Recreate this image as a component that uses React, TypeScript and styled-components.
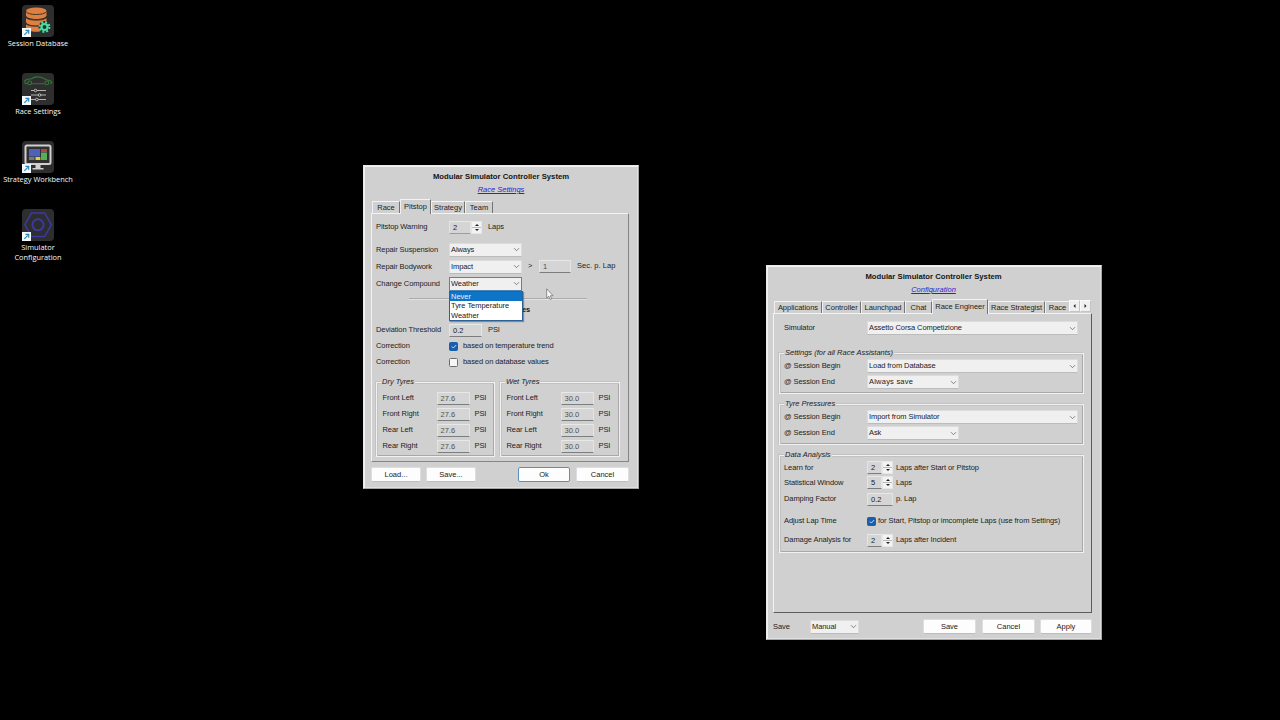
import React from "react";
import styled, { createGlobalStyle } from "styled-components";

const Global = createGlobalStyle`
  * { box-sizing: border-box; }
  html, body { margin: 0; height: 100%; background: #000; overflow: hidden; }
`;

const Desktop = styled.main`
  position: relative;
  width: 1280px;
  height: 720px;
  background: #000;
  font-family: "Liberation Sans", Arial, sans-serif;
  font-size: 7.5px;
  color: #222;
`;

const Shortcuts = styled.nav`
  display: flex;
  flex-direction: column;
  width: 76px;
  padding-top: 5px;
`;

const Shortcut = styled.div`
  display: flex;
  flex-direction: column;
  align-items: center;
  height: 68px;
`;

const ShortcutLabel = styled.span`
  margin: 1px -4px 0;
  font-family: "Open Sans", "Noto Sans", sans-serif;
  font-size: 7.4px;
  line-height: 10px;
  text-align: center;
  white-space: pre;
  color: #f8f8f8;
`;

const Window = styled.section<{ $x: number; $y: number; $w: number; $h: number; $pl: number }>`
  position: absolute;
  left: ${(p) => p.$x}px;
  top: ${(p) => p.$y}px;
  width: ${(p) => p.$w}px;
  height: ${(p) => p.$h}px;
  display: flex;
  flex-direction: column;
  padding: 5px 9px 0 ${(p) => p.$pl}px;
  background: #d0d0d0;
  border: 1px solid;
  border-color: #e9e9e9 #a5a5a5 #a5a5a5 #e9e9e9;
  box-shadow: inset 1px 1px 0 #f2f2f2, inset -1px -1px 0 #e0e0e0;
`;

const Title = styled.h1`
  margin: 0;
  padding-left: 2px;
  font-size: 7.7px;
  line-height: 11px;
  font-weight: 700;
  text-align: center;
  letter-spacing: 0.01px;
  color: #151515;
`;

const Subtitle = styled.a`
  align-self: center;
  margin: 3px 0 0 2px;
  line-height: 10px;
  font-style: italic;
  text-decoration: underline;
  letter-spacing: 0;
  color: #2824d0;
`;

const Tabs = styled.div`
  display: flex;
  align-items: flex-end;
  height: 14px;
  margin: 4px 0 0 1px;
`;

const Tab = styled.div<{ $w: number; $on?: boolean; $cut?: boolean }>`
  width: ${(p) => p.$w}px;
  height: ${(p) => (p.$on ? 15 : 12)}px;
  margin-bottom: ${(p) => (p.$on ? -1 : 0)}px;
  padding-top: ${(p) => (p.$on ? 1 : 0)}px;
  line-height: 11px;
  text-align: center;
  white-space: nowrap;
  background: #d0d0d0;
  border-top: 1px solid #f3f3f3;
  border-left: 1px solid #f0f0f0;
  border-right: ${(p) => (p.$cut ? "none" : "1px solid #747474")};
  letter-spacing: -0.02px;
  z-index: ${(p) => (p.$on ? 1 : 0)};
`;

const TabScroll = styled.div`
  display: flex;
  align-items: center;
  justify-content: center;
  width: 11px;
  height: 12px;
  margin-bottom: 1px;
  background: #f0f0f0;
  border: 1px solid #fafafa;
  border-right-color: #c4c4c4;
  border-bottom-color: #c4c4c4;
`;

const Panel = styled.div<{ $h: number; $pad: number; $dark?: boolean }>`
  display: flex;
  flex-direction: column;
  height: ${(p) => p.$h}px;
  padding-left: ${(p) => p.$pad}px;
  border: 1px solid;
  border-color: #f3f3f3 ${(p) => (p.$dark ? "#5c5c5c #5c5c5c" : "#858585 #858585")} #f3f3f3;
`;

const Row = styled.div<{ $h?: number; $mt?: number }>`
  position: relative;
  display: flex;
  flex: none;
  align-items: center;
  height: ${(p) => p.$h ?? 16}px;
  margin-top: ${(p) => p.$mt ?? 0}px;
`;

const Text = styled.span<{ $w?: number; $ls?: number; $up?: number }>`
  flex: none;
  width: ${(p) => (p.$w ? `${p.$w}px` : "auto")};
  padding-bottom: ${(p) => p.$up ?? 0}px;
  line-height: 10px;
  white-space: nowrap;
  letter-spacing: ${(p) => p.$ls ?? -0.08}px;
`;

const Gap = styled.span<{ $w: number }>`
  flex: none;
  width: ${(p) => p.$w}px;
`;

const Spring = styled.span`
  flex: 1;
`;

const SelectBox = styled.div<{ $w: number; $open?: boolean }>`
  display: flex;
  flex: none;
  align-items: center;
  justify-content: space-between;
  width: ${(p) => p.$w}px;
  height: 14px;
  padding: 0 1px;
  background: #f0f0f0;
  border: 1px solid ${(p) => (p.$open ? "#4f86b8" : "#dcdcdc")};
  border-bottom-color: ${(p) => (p.$open ? "#4f86b8" : "#bcbcbc")};
`;

const Field = styled.div<{ $w: number; $muted?: boolean; $blue?: boolean }>`
  flex: none;
  width: ${(p) => p.$w}px;
  height: 13px;
  padding: 0 0 0 3px;
  line-height: 11px;
  letter-spacing: 0;
  background: #d5d5d5;
  border: 1px solid;
  border-color: #e8e8e8 #e4e4e4 ${(p) => (p.$blue ? "#7fa3d0" : "#7d7d7d")} #e4e4e4;
  color: ${(p) => (p.$muted ? "#505050" : "#222")};
`;

const SpinButtons = styled.div`
  display: flex;
  flex-direction: column;
  justify-content: space-between;
  align-items: center;
  width: 11px;
  height: 13px;
  padding: 2px 0;
  background: linear-gradient(#f3f3f3 46%, #b9b9b9 46%, #b9b9b9 54%, #f3f3f3 54%);
  border: 1px solid #e6e6e6;
`;

const Check = styled.span<{ $on?: boolean }>`
  display: flex;
  flex: none;
  align-items: center;
  justify-content: center;
  width: 9px;
  height: 9px;
  border-radius: 1.5px;
  background: ${(p) => (p.$on ? "#1a5fae" : "#f6f6f6")};
  border: 1px solid ${(p) => (p.$on ? "#1a5fae" : "#6d6d6d")};
`;

const Rule = styled.div`
  flex: none;
  width: 178px;
  height: 2px;
  margin: 6px 0 0 33px;
  border-top: 1px solid #ababab;
  border-bottom: 1px solid #e2e2e2;
`;

const Heading = styled.h2`
  margin: 0;
  padding-left: 146px;
  font-size: 7.5px;
  line-height: 10px;
  letter-spacing: -0.1px;
  color: #151515;
`;

const Popup = styled.ul`
  position: absolute;
  z-index: 3;
  left: 73px;
  top: 16px;
  width: 74px;
  height: 30px;
  margin: 0;
  padding: 0;
  list-style: none;
  background: #fff;
  border: 1px solid #2b6296;
  box-shadow: 1px 1px 1px rgba(20, 60, 110, 0.45);
`;

const Option = styled.li<{ $on?: boolean }>`
  height: 9.4px;
  padding-left: 1px;
  line-height: 9.6px;
  letter-spacing: -0.03px;
  background: ${(p) => (p.$on ? "#0d74c8" : "transparent")};
  color: ${(p) => (p.$on ? "#e6f3ff" : "#222")};
`;

const Groups = styled.div`
  display: flex;
  gap: 5px;
  margin-top: 12px;
`;

const Group = styled.fieldset<{ $w: number; $h: number; $mt?: number; $pt?: number }>`
  position: relative;
  flex: none;
  width: ${(p) => p.$w}px;
  height: ${(p) => p.$h}px;
  margin: ${(p) => p.$mt ?? 0}px 0 0;
  padding: ${(p) => p.$pt ?? 6}px 0 0 4px;
  border: 1px solid #f1f1f1;
  box-shadow: inset 1px 1px 0 #c2c2c2, -1px -1px 0 #c2c2c2, inset -1px -1px 0 #a8a8a8;
`;

const GroupName = styled.span`
  position: absolute;
  left: 4px;
  top: -6px;
  padding: 0 1px;
  line-height: 10px;
  font-style: italic;
  white-space: nowrap;
  letter-spacing: 0;
  background: #d0d0d0;
`;

const Footer = styled.footer<{ $mt: number }>`
  display: flex;
  align-items: center;
  height: 15px;
  margin-top: ${(p) => p.$mt}px;
`;

const Button = styled.button<{ $w: number; $main?: boolean }>`
  flex: none;
  width: ${(p) => p.$w}px;
  height: 15px;
  padding: 0;
  font: inherit;
  line-height: 11px;
  letter-spacing: 0;
  color: #222;
  background: #fdfdfd;
  border: 1px solid ${(p) => (p.$main ? "#5b8fc0" : "#dedede")};
  border-bottom-color: ${(p) => (p.$main ? "#5b8fc0" : "#bdbdbd")};
  border-radius: 2px;
`;

const Pointer = styled.svg`
  position: absolute;
  left: 546px;
  top: 288px;
`;

const Chevron = () => (
  <svg width="7" height="5" viewBox="0 0 7 5" fill="none" stroke="#666" strokeWidth="0.8">
    <path d="M1 1.2 3.5 3.7 6 1.2" />
  </svg>
);

const Select = ({ w, open, ls, children }: { w: number; open?: boolean; ls?: number; children: string }) => (
  <SelectBox $w={w} $open={open}>
    <Text $ls={ls}>{children}</Text>
    <Chevron />
  </SelectBox>
);

const Spin = ({ w, blue, children }: { w: number; blue?: boolean; children: string }) => (
  <>
    <Field $w={w} $blue={blue}>{children}</Field>
    <SpinButtons>
      <svg width="4" height="2" viewBox="0 0 4 2"><path d="M0 2 2 0 4 2z" fill="#222" /></svg>
      <svg width="4" height="2" viewBox="0 0 4 2"><path d="M0 0 2 2 4 0z" fill="#222" /></svg>
    </SpinButtons>
  </>
);

const Tick = () => (
  <Check $on>
    <svg width="6" height="5" viewBox="0 0 6 5" fill="none" stroke="#dcebfa" strokeWidth="0.9">
      <path d="M.8 2.5 2.3 4 5.2 1" />
    </svg>
  </Check>
);

const ShortcutArrow = () => (
  <g>
    <rect x="0" y="23" width="9" height="9" fill="#f4f9fc" />
    <path d="M2.3 29.8 5.8 26.3M3.4 25.4h3.3v3.3" fill="none" stroke="#2f86b5" strokeWidth="1.2" />
  </g>
);

const Tile = ({ children }: { children: React.ReactNode }) => (
  <svg width="32" height="32" viewBox="0 0 32 32">
    <rect width="32" height="32" rx="4" fill="#2e2e2f" />
    {children}
    <ShortcutArrow />
  </svg>
);

const DatabaseIcon = () => (
  <Tile>
    <g fill="#dd8142">
      <path d="M4 19.2c2 2.3 17 2.3 20.500 0v4.300c-2 4.300-18.500 4.300-20.500 0z" />
      <path d="M4 13c2 2.500 18 2.500 20.500 0v4.200c-2 4.300-18.500 4.300-20.500 0z" />
      <path d="M4 6v4.800c2 4.300 18.500 4.300 20.500 0V6z" />
      <ellipse cx="14.250" cy="6" rx="10.250" ry="3.400" />
    </g>
    <path d="M4 6.500c2 4 18.500 4 20.500 0M4 12.200c2 4 18.500 4 20.500 0M4 18.300c2 4 18.500 4 20.500 0" fill="none" stroke="#3b2b22" strokeWidth="0.9" />
    <circle cx="22.500" cy="22" r="6" fill="#2e2e2f" />
    <circle cx="22.500" cy="22" r="4.900" fill="none" stroke="#48dfa2" strokeWidth="2" strokeDasharray="2 1.848" />
    <circle cx="22.500" cy="22" r="3" fill="none" stroke="#48dfa2" strokeWidth="2.200" />
  </Tile>
);

const RaceIcon = () => (
  <Tile>
    <g fill="none" stroke="#2f7a35" strokeWidth="1.1">
      <path d="M5.500 10.500H3.200L2.800 7.500c2-1.300 5-1.600 7-1.900 2.500-2 8-2.500 12-.2l3.500 1.600c2.500.200 4 .800 4.500 2.500l-1.300 1.300M9.800 10.700H22.500" />
      <circle cx="7.700" cy="9.900" r="1.900" />
      <circle cx="24.800" cy="9.900" r="1.900" />
    </g>
    <g stroke="#c4c4c4" strokeWidth="0.9">
      <path d="M9 17.500h15M9 22h15M9 26.500h15" />
      <g fill="#2e2e2f">
        <circle cx="13.500" cy="17.500" r="1.300" />
        <circle cx="17.500" cy="22" r="1.300" />
        <circle cx="14.800" cy="26.500" r="1.300" />
      </g>
    </g>
  </Tile>
);

const WorkbenchIcon = () => (
  <Tile>
    <rect x="3.500" y="4.500" width="25" height="18.500" rx="1.500" fill="#303033" stroke="#d0d0d0" strokeWidth="2" />
    <path d="M13.500 23.500h5V27h3v1.500h-11V27h3z" fill="#d0d0d0" />
    <rect x="7" y="8" width="11" height="7.500" fill="#5062b8" />
    <rect x="19" y="8" width="6" height="3" fill="#b04545" />
    <rect x="19" y="11.500" width="6" height="7.500" fill="#58ad59" />
    <rect x="7" y="16" width="5.500" height="3" fill="#777" />
    <rect x="13.500" y="16" width="4.800" height="3" fill="#d9d33c" />
  </Tile>
);

const ConfigIcon = () => (
  <Tile>
    <g fill="none" stroke="#3b39a8" strokeWidth="1.500">
      <path d="M9.500 4h13.200L29.300 15.800 22.700 27.500H9.500L2.900 15.800z" />
      <circle cx="16" cy="15.800" r="5.600" strokeWidth="1.900" />
    </g>
  </Tile>
);

const corners = ["Front Left", "Front Right", "Rear Left", "Rear Right"];

const Tyres = ({ name, value, w }: { name: string; value: string; w: number }) => (
  <Group $w={w} $h={75} $pt={7}>
    <GroupName>{name}</GroupName>
    {corners.map((c) => (
      <Row key={c}>
        <Gap $w={1.500} />
        <Text $w={54}>{c}</Text>
        <Field $w={33} $muted>{value}</Field>
        <Gap $w={5} />
        <Text>PSI</Text>
      </Row>
    ))}
  </Group>
);

const RaceSettings = () => (
  <Window $x={363} $y={165} $w={276} $h={324} $pl={7}>
    <Title>Modular Simulator Controller System</Title>
    <Subtitle>Race Settings</Subtitle>
    <Tabs>
      <Tab $w={28}>Race</Tab>
      <Tab $w={31} $on>Pitstop</Tab>
      <Tab $w={34}>Strategy</Tab>
      <Tab $w={28}>Team</Tab>
    </Tabs>
    <Panel $h={249} $pad={4}>
      <Row $h={26}>
        <Text $w={73}>Pitstop Warning</Text>
        <Spin w={22} blue>2</Spin>
        <Gap $w={6} />
        <Text>Laps</Text>
      </Row>
      <Row $h={17} $mt={1}>
        <Text $w={73}>Repair Suspension</Text>
        <Select w={73}>Always</Select>
      </Row>
      <Row $h={17}>
        <Text $w={73}>Repair Bodywork</Text>
        <Select w={73}>Impact</Select>
        <Gap $w={6} />
        <Text $w={11} $up={1}>&gt;</Text>
        <Field $w={32} $muted>1</Field>
        <Gap $w={6} />
        <Text $up={2} $ls={0.05}>Sec. p. Lap</Text>
      </Row>
      <Row $h={17}>
        <Text $w={73}>Change Compound</Text>
        <Select w={73} open>Weather</Select>
        <Popup>
          <Option $on>Never</Option>
          <Option>Tyre Temperature</Option>
          <Option>Weather</Option>
        </Popup>
      </Row>
      <Rule />
      <Row $h={20}>
        <Heading>es</Heading>
      </Row>
      <Row $mt={2}>
        <Text $w={73}>Deviation Threshold</Text>
        <Field $w={33}>0.2</Field>
        <Gap $w={6} />
        <Text>PSI</Text>
      </Row>
      <Row>
        <Text $w={73}>Correction</Text>
        <Tick />
        <Gap $w={5} />
        <Text>based on temperature trend</Text>
      </Row>
      <Row>
        <Text $w={73}>Correction</Text>
        <Check />
        <Gap $w={5} />
        <Text>based on database values</Text>
      </Row>
      <Groups>
        <Tyres name="Dry Tyres" value="27.6" w={119} />
        <Tyres name="Wet Tyres" value="30.0" w={120} />
      </Groups>
    </Panel>
    <Footer $mt={5}>
      <Button $w={50}>Load...</Button>
      <Gap $w={5} />
      <Button $w={50}>Save...</Button>
      <Spring />
      <Button $w={52} $main>Ok</Button>
      <Gap $w={6} />
      <Button $w={53}>Cancel</Button>
    </Footer>
  </Window>
);

const Configuration = () => (
  <Window $x={766} $y={265} $w={336} $h={375} $pl={6}>
    <Title>Modular Simulator Controller System</Title>
    <Subtitle>Configuration</Subtitle>
    <Tabs>
      <Tab $w={48}>Applications</Tab>
      <Tab $w={39}>Controller</Tab>
      <Tab $w={44}>Launchpad</Tab>
      <Tab $w={27}>Chat</Tab>
      <Tab $w={56} $on>Race Engineer</Tab>
      <Tab $w={57}>Race Strategist</Tab>
      <Tab $w={24} $cut>Race</Tab>
      <TabScroll>
        <svg width="3" height="4" viewBox="0 0 3 4"><path d="M2.500 0 .5 2 2.500 4z" fill="#222" /></svg>
      </TabScroll>
      <TabScroll>
        <svg width="3" height="4" viewBox="0 0 3 4"><path d="M.5 0 2.500 2 .5 4z" fill="#222" /></svg>
      </TabScroll>
    </Tabs>
    <Panel $h={300} $pad={5} $dark>
      <Row $mt={6}>
        <Gap $w={5} />
        <Text $w={83}>Simulator</Text>
        <Select w={211}>Assetto Corsa Competizione</Select>
      </Row>
      <Group $w={305} $h={41} $mt={17} $pt={4}>
        <GroupName>Settings (for all Race Assistants)</GroupName>
        <Row>
          <Text $w={83}>@ Session Begin</Text>
          <Select w={211}>Load from Database</Select>
        </Row>
        <Row>
          <Text $w={83}>@ Session End</Text>
          <Select w={92} ls={0.22}>Always save</Select>
        </Row>
      </Group>
      <Group $w={305} $h={41} $mt={10} $pt={4}>
        <GroupName>Tyre Pressures</GroupName>
        <Row>
          <Text $w={83}>@ Session Begin</Text>
          <Select w={211}>Import from Simulator</Select>
        </Row>
        <Row>
          <Text $w={83}>@ Session End</Text>
          <Select w={92}>Ask</Select>
        </Row>
      </Group>
      <Group $w={305} $h={98} $mt={10} $pt={4}>
        <GroupName>Data Analysis</GroupName>
        <Row $h={15}>
          <Text $w={83}>Learn for</Text>
          <Spin w={15}>2</Spin>
          <Gap $w={3} />
          <Text>Laps after Start or Pitstop</Text>
        </Row>
        <Row $h={15}>
          <Text $w={83}>Statistical Window</Text>
          <Spin w={15}>5</Spin>
          <Gap $w={3} />
          <Text>Laps</Text>
        </Row>
        <Row $h={16} $mt={1}>
          <Text $w={83}>Damping Factor</Text>
          <Field $w={26}>0.2</Field>
          <Gap $w={3} />
          <Text>p. Lap</Text>
        </Row>
        <Row $mt={6}>
          <Text $w={83}>Adjust Lap Time</Text>
          <Tick />
          <Gap $w={2} />
          <Text>for Start, Pitstop or imcomplete Laps (use from Settings)</Text>
        </Row>
        <Row $mt={3}>
          <Text $w={83}>Damage Analysis for</Text>
          <Spin w={15}>2</Spin>
          <Gap $w={3} />
          <Text>Laps after Incident</Text>
        </Row>
      </Group>
    </Panel>
    <Footer $mt={6}>
      <Text $w={37}>Save</Text>
      <Select w={49}>Manual</Select>
      <Spring />
      <Button $w={53}>Save</Button>
      <Gap $w={6} />
      <Button $w={53}>Cancel</Button>
      <Gap $w={5} />
      <Button $w={52}>Apply</Button>
    </Footer>
  </Window>
);

export default function App() {
  return (
    <Desktop>
      <Global />
      <Shortcuts>
        <Shortcut><DatabaseIcon /><ShortcutLabel>Session Database</ShortcutLabel></Shortcut>
        <Shortcut><RaceIcon /><ShortcutLabel>Race Settings</ShortcutLabel></Shortcut>
        <Shortcut><WorkbenchIcon /><ShortcutLabel>Strategy Workbench</ShortcutLabel></Shortcut>
        <Shortcut><ConfigIcon /><ShortcutLabel>{"Simulator\nConfiguration"}</ShortcutLabel></Shortcut>
      </Shortcuts>
      <RaceSettings />
      <Configuration />
      <Pointer width="8" height="13" viewBox="0 0 8 13">
        <path d="M.7.800V10L2.800 8.200 4.200 11.500 5.700 10.800 4.300 7.700H7z" fill="#fafafa" stroke="#555" strokeWidth="0.6" />
      </Pointer>
    </Desktop>
  );
}
